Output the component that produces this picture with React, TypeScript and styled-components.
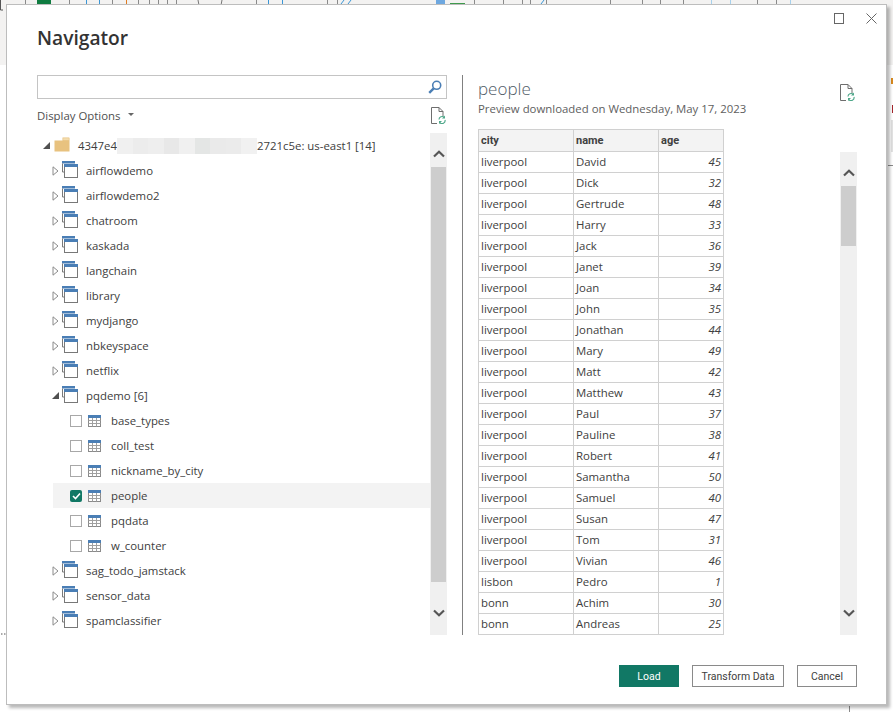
import React from 'react';
import styled, { createGlobalStyle } from 'styled-components';

const GlobalStyle = createGlobalStyle`
  html, body {
    margin: 0;
    padding: 0;
    background: #ffffff;
  }
  body {
    width: 893px;
    height: 712px;
    overflow: hidden;
    font-family: 'Open Sans', 'Noto Sans', sans-serif;
    font-size: 11.4px;
    color: #404040;
  }
  * {
    box-sizing: border-box;
  }
`;

const Page = styled.div`
  position: relative;
  width: 893px;
  height: 712px;
  overflow: hidden;
`;

const Backdrop = styled.svg`
  position: absolute;
  left: 0;
  top: 0;
`;

const Dialog = styled.div`
  position: absolute;
  left: 6px;
  top: 4px;
  width: 881px;
  height: 701px;
  display: flex;
  flex-direction: column;
  background: #ffffff;
  border: 1px solid #bdbdbd;
  box-shadow: 3px 3px 3px rgba(0, 0, 0, 0.28);
`;

const TitleBar = styled.div`
  height: 70px;
  display: flex;
  justify-content: space-between;
  padding: 0 9px 0 30px;
`;

const Heading = styled.h1`
  margin: 19px 0 0;
  font-size: 19.2px;
  line-height: 28px;
  font-weight: 600;
  color: #333333;
`;

const WindowControls = styled.div`
  display: flex;
  gap: 22px;
  margin-top: 8px;
  height: 12px;
`;

const Body = styled.div`
  display: flex;
  height: 560px;
  margin: 0 29px 0 30px;
`;

const LeftPane = styled.div`
  width: 410px;
  display: flex;
  flex-direction: column;
`;

const SearchBox = styled.div`
  height: 24px;
  display: flex;
  align-items: center;
  justify-content: flex-end;
  padding-right: 4px;
  border: 1px solid #c4c4c4;
`;

const OptionsRow = styled.div`
  height: 34px;
  display: flex;
  align-items: center;
  justify-content: space-between;
  padding: 0 1px 2px 0;
`;

const DisplayOptions = styled.div`
  display: flex;
  align-items: center;
  gap: 8px;
  color: #505050;
`;

const Caret = styled.span`
  width: 0;
  height: 0;
  margin-bottom: 2px;
  border-left: 3px solid transparent;
  border-right: 3px solid transparent;
  border-top: 3px solid #666666;
`;

const TreeArea = styled.div`
  flex: 1;
  display: flex;
  min-height: 0;
`;

const Tree = styled.div`
  flex: 1;
  overflow: hidden;
`;

const Row = styled.div<{ $indent: number; $selected?: boolean }>`
  height: 25px;
  display: flex;
  align-items: center;
  white-space: nowrap;
  margin-left: ${props => (props.$selected !== undefined ? '16px' : '0')};
  padding-left: ${props => props.$indent}px;
  background: ${props => (props.$selected ? '#f3f3f3' : 'transparent')};
`;

const Blur = styled.span`
  display: flex;
  width: 140px;
  height: 16px;
`;

const BlurCell = styled.span<{ $shade: string }>`
  flex: 1;
  background: ${props => props.$shade};
`;

const Label = styled.span<{ $gap: number }>`
  margin-left: ${props => props.$gap}px;
`;

const Check = styled.span<{ $checked?: boolean }>`
  width: 12px;
  height: 12px;
  display: flex;
  align-items: center;
  justify-content: center;
  border: ${props => (props.$checked ? 'none' : '1px solid #a8a8a8')};
  border-radius: ${props => (props.$checked ? '2px' : '0')};
  background: ${props => (props.$checked ? '#117865' : '#ffffff')};
  margin-right: 6px;
`;

const Divider = styled.div`
  width: 1px;
  margin: 0 15px;
  background: #808080;
`;

const RightPane = styled.div`
  width: 379px;
  display: flex;
  flex-direction: column;
`;

const PreviewHeader = styled.div`
  height: 54px;
  display: flex;
  justify-content: space-between;
`;

const PreviewName = styled.div`
  font-size: 17px;
  line-height: 24px;
  font-weight: 300;
  color: #4f5b66;
  margin-top: 2px;
`;

const PreviewDate = styled.div`
  color: #606060;
  line-height: 16px;
`;

const RefreshSlot = styled.div`
  margin: 9px 2px 0 0;
`;

const PreviewBody = styled.div`
  flex: 1;
  display: flex;
  justify-content: space-between;
  min-height: 0;
`;

const TableClip = styled.div`
  width: 246px;
  overflow: hidden;
`;

const DataTable = styled.table`
  width: 246px;
  table-layout: fixed;
  border-collapse: separate;
  border-spacing: 0;
  border-top: 1px solid #d0d0d0;
  border-left: 1px solid #d0d0d0;
`;

const HeadCell = styled.th`
  height: 22px;
  padding: 0 2px;
  text-align: left;
  font-family: Roboto, 'Open Sans', sans-serif;
  font-size: 11px;
  font-weight: 700;
  background: #f3f3f3;
  border-right: 1px solid #d0d0d0;
  border-bottom: 1px solid #d0d0d0;
`;

const Cell = styled.td<{ $number?: boolean }>`
  height: 21px;
  padding: 0 2px 1px;
  border-right: 1px solid #d0d0d0;
  border-bottom: 1px solid #d0d0d0;
  text-align: ${props => (props.$number ? 'right' : 'left')};
  font-style: ${props => (props.$number ? 'italic' : 'normal')};
`;

const ScrollTrack = styled.div<{ $top: number }>`
  width: 17px;
  margin-top: ${props => props.$top}px;
  display: flex;
  flex-direction: column;
  align-items: center;
  background: #f0f0f0;
`;

const ArrowTop = styled.div`
  height: 34px;
  padding-top: 17px;
  display: flex;
  justify-content: center;
`;

const ArrowBottom = styled.div`
  height: 44px;
  margin-top: auto;
  display: flex;
  align-items: center;
  justify-content: center;
`;

const Thumb = styled.div<{ $height: number }>`
  width: 15px;
  height: ${props => props.$height}px;
  background: #cdcdcd;
`;

const Footer = styled.div`
  display: flex;
  justify-content: flex-end;
  gap: 13px;
  margin: 30px 29px 0 30px;
`;

const ActionButton = styled.button<{ $primary?: boolean; $width: number }>`
  width: ${props => props.$width}px;
  height: 22px;
  padding: 0;
  font-family: Roboto, 'Open Sans', sans-serif;
  font-size: 10.5px;
  color: ${props => (props.$primary ? '#ffffff' : '#404040')};
  background: ${props => (props.$primary ? '#117865' : '#ffffff')};
  border: ${props => (props.$primary ? 'none' : '1px solid #8a8a8a')};
`;

const Chevron = ({ up }: { up?: boolean }) => (
  <svg width="12" height="8" viewBox="0 0 12 8">
    <path
      d={up ? 'M1 6.500 6 1.800l5 4.700' : 'M1 1.500 6 6.200l5-4.700'}
      fill="none"
      stroke="#565656"
      strokeWidth="2.200"
    />
  </svg>
);

const Scrollbar = ({ top = 0, thumb }: { top?: number; thumb: number }) => (
  <ScrollTrack $top={top}>
    <ArrowTop>
      <Chevron up />
    </ArrowTop>
    <Thumb $height={thumb} />
    <ArrowBottom>
      <Chevron />
    </ArrowBottom>
  </ScrollTrack>
);

const FileRefresh = () => (
  <svg width="15" height="17" viewBox="0 0 15 17">
    <path d="M.5.500h7.500l4 4v5M8 .500v4h4M6 16.500H.5V.5" fill="none" stroke="#6e6e6e" />
    <path d="M8 12.500a3 3 0 0 1 5.200-2M14 13a3 3 0 0 1-5.200 2.600" fill="none" stroke="#4fa88a" strokeWidth="1.200" />
    <path d="M14 8.600v3h-3zM8 17v-3h3z" fill="#4fa88a" />
  </svg>
);

const OpenTriangle = () => (
  <svg width="7" height="10" viewBox="0 0 7 10">
    <path d="M1 .800v8.400L6 5z" fill="none" stroke="#8a8a8a" />
  </svg>
);

const FilledTriangle = () => (
  <svg width="7" height="7" viewBox="0 0 7 7">
    <path d="M0 7 7 0v7z" fill="#505050" />
  </svg>
);

const FolderIcon = () => (
  <svg width="16" height="15" viewBox="0 0 16 15">
    <path d="M.5 3.500h8V.5h6.500a.5.500 0 0 1 .5.500v13.500H.5z" fill="#e8c27f" />
    <path d="M9.200 1.200h5.600v2H9.200z" fill="#f3dcae" />
  </svg>
);

const DatabaseIcon = () => (
  <svg width="16" height="17" viewBox="0 0 16 17">
    <rect x="0" y="0" width="13" height="2.500" fill="#4a7eb5" />
    <path d="M.5 2.500V11H2" fill="none" stroke="#7a7a7a" />
    <rect x="2.500" y="3.500" width="13" height="13" fill="#ffffff" stroke="#787878" />
    <rect x="2" y="3" width="14" height="3" fill="#4a7eb5" />
  </svg>
);

const TableIcon = () => (
  <svg width="13" height="12" viewBox="0 0 13 12">
    <rect x=".5" y=".5" width="12" height="11" fill="#ffffff" stroke="#8a8a8a" />
    <path d="M4.500 3v8.500M8.500 3v8.500M.5 5.500h12M.5 8.500h12" stroke="#a0a0a0" />
    <rect x="0" y="0" width="13" height="3" fill="#4a7eb5" />
  </svg>
);

const SearchIcon = () => (
  <svg width="14" height="14" viewBox="0 0 14 14">
    <circle cx="8.700" cy="5.300" r="4" fill="none" stroke="#4a7eb5" strokeWidth="1.600" />
    <path d="M5.700 8.300 1.200 12.800" stroke="#4a7eb5" strokeWidth="2.400" />
  </svg>
);

const RibbonScraps = () => (
  <Backdrop width="893" height="712" viewBox="0 0 893 712">
    <rect x="0" y="0" width="893" height="65" fill="#f3f2f1" />
    <path d="M.5 0v10H3" fill="none" stroke="#555555" />
    <path d="M1 634h1.500M4 634h1.500" stroke="#555555" />
    <rect x="37" y="0" width="14" height="4" fill="#107c41" />
    <rect x="436" y="0" width="9" height="4" fill="#6ea8e0" />
    <path
      d="M25.500 0v4M69.500 0v4M112.500 0v4M138.500 0v4M149.500 0v4M158.500 0v4M167.500 0v4M176.500 0v4M256.500 0v4M327.500 0v4M337.500 0v4M474.500 0v4M503.500 0v4M522.500 0v4M530.500 0v4M546.500 0v4M610.500 0v4M642.500 0v4M660.500 0v4M683.500 0v4M757.500 0v4M776.500 0v4"
      stroke="#8a8a8a"
    />
    <path d="M86.500 0v4M99.500 0v4M268.500 0v4M282.500 0v4M341 4l3-4M348 4l3-4M541 4l3-4" stroke="#3a96d6" />
    <path d="M126.500 0v4" stroke="#e07b20" />
    <path d="M711.500 0v4M730.500 0v4M790.500 0v4" stroke="#a6d0ec" />
    <path d="M198 0a12 12 0 0 0 24 0" fill="none" stroke="#777777" />
    <path d="M450 3.500h15" stroke="#3f9a4d" />
    <rect x="891" y="78" width="2" height="6" fill="#d98a1f" />
    <rect x="892" y="105" width="1" height="8" fill="#a4262c" />
    <rect x="891" y="120" width="2" height="32" fill="#e3e3e3" />
    <path d="M888 165.500h5" stroke="#8a8a8a" />
    <path d="M849.500 706v6" stroke="#8a8a8a" />
  </Backdrop>
);

const blurShades = ['#f0f0f0', '#ececec', '#eeeeee', '#e8e8e8', '#f0f0f0', '#e4e6e5', '#eaeaea', '#ebebeb', '#f1f1f1'];

const topDatabases = ['airflowdemo', 'airflowdemo2', 'chatroom', 'kaskada', 'langchain', 'library', 'mydjango', 'nbkeyspace', 'netflix'];
const tables = ['base_types', 'coll_test', 'nickname_by_city', 'people', 'pqdata', 'w_counter'];
const bottomDatabases = ['sag_todo_jamstack', 'sensor_data', 'spamclassifier'];

const people: [string, string, number][] = [
  ['liverpool', 'David', 45],
  ['liverpool', 'Dick', 32],
  ['liverpool', 'Gertrude', 48],
  ['liverpool', 'Harry', 33],
  ['liverpool', 'Jack', 36],
  ['liverpool', 'Janet', 39],
  ['liverpool', 'Joan', 34],
  ['liverpool', 'John', 35],
  ['liverpool', 'Jonathan', 44],
  ['liverpool', 'Mary', 49],
  ['liverpool', 'Matt', 42],
  ['liverpool', 'Matthew', 43],
  ['liverpool', 'Paul', 37],
  ['liverpool', 'Pauline', 38],
  ['liverpool', 'Robert', 41],
  ['liverpool', 'Samantha', 50],
  ['liverpool', 'Samuel', 40],
  ['liverpool', 'Susan', 47],
  ['liverpool', 'Tom', 31],
  ['liverpool', 'Vivian', 46],
  ['lisbon', 'Pedro', 1],
  ['bonn', 'Achim', 30],
  ['bonn', 'Andreas', 25]
];

const DatabaseRow = ({ name, open }: { name: string; open?: boolean }) => (
  <Row $indent={15}>
    {open ? <FilledTriangle /> : <OpenTriangle />}
    <Label $gap={3}>
      <DatabaseIcon />
    </Label>
    <Label $gap={8}>{name}</Label>
  </Row>
);

const App = () => (
  <Page>
    <GlobalStyle />
    <RibbonScraps />
    <Dialog>
      <TitleBar>
        <Heading>Navigator</Heading>
        <WindowControls>
          <svg width="10" height="11" viewBox="0 0 10 11">
            <rect x=".5" y=".5" width="9" height="10" fill="none" stroke="#666666" />
          </svg>
          <svg width="11" height="11" viewBox="0 0 11 11">
            <path d="M.5.500l10 10M10.500.500l-10 10" stroke="#666666" />
          </svg>
        </WindowControls>
      </TitleBar>
      <Body>
        <LeftPane>
          <SearchBox>
            <SearchIcon />
          </SearchBox>
          <OptionsRow>
            <DisplayOptions>
              Display Options
              <Caret />
            </DisplayOptions>
            <FileRefresh />
          </OptionsRow>
          <TreeArea>
            <Tree>
              <Row $indent={6}>
                <FilledTriangle />
                <Label $gap={4}>
                  <FolderIcon />
                </Label>
                <Label $gap={8}>4347e4</Label>
                <Blur>
                  {blurShades.map((shade, i) => (
                    <BlurCell key={i} $shade={shade} />
                  ))}
                </Blur>
                2721c5e: us-east1 [14]
              </Row>
              {topDatabases.map(name => (
                <DatabaseRow key={name} name={name} />
              ))}
              <DatabaseRow name="pqdemo [6]" open />
              {tables.map(name => (
                <Row key={name} $indent={17} $selected={name === 'people'}>
                  <Check $checked={name === 'people'}>
                    {name === 'people' && (
                      <svg width="9" height="8" viewBox="0 0 9 8">
                        <path d="M1 4l2.500 2.500L8 1.500" fill="none" stroke="#ffffff" strokeWidth="1.600" />
                      </svg>
                    )}
                  </Check>
                  <TableIcon />
                  <Label $gap={10}>{name}</Label>
                </Row>
              ))}
              {bottomDatabases.map(name => (
                <DatabaseRow key={name} name={name} />
              ))}
            </Tree>
            <Scrollbar thumb={415} />
          </TreeArea>
        </LeftPane>
        <Divider />
        <RightPane>
          <PreviewHeader>
            <div>
              <PreviewName>people</PreviewName>
              <PreviewDate>Preview downloaded on Wednesday, May 17, 2023</PreviewDate>
            </div>
            <RefreshSlot>
              <FileRefresh />
            </RefreshSlot>
          </PreviewHeader>
          <PreviewBody>
            <TableClip>
              <DataTable>
                <colgroup>
                  <col width="95" />
                  <col width="85" />
                  <col width="65" />
                </colgroup>
                <thead>
                  <tr>
                    <HeadCell>city</HeadCell>
                    <HeadCell>name</HeadCell>
                    <HeadCell>age</HeadCell>
                  </tr>
                </thead>
                <tbody>
                  {people.map(([city, name, age]) => (
                    <tr key={name}>
                      <Cell>{city}</Cell>
                      <Cell>{name}</Cell>
                      <Cell $number>{age}</Cell>
                    </tr>
                  ))}
                </tbody>
              </DataTable>
            </TableClip>
            <Scrollbar top={23} thumb={60} />
          </PreviewBody>
        </RightPane>
      </Body>
      <Footer>
        <ActionButton $primary $width={60}>Load</ActionButton>
        <ActionButton $width={92}>Transform Data</ActionButton>
        <ActionButton $width={60}>Cancel</ActionButton>
      </Footer>
    </Dialog>
  </Page>
);

export default App;
